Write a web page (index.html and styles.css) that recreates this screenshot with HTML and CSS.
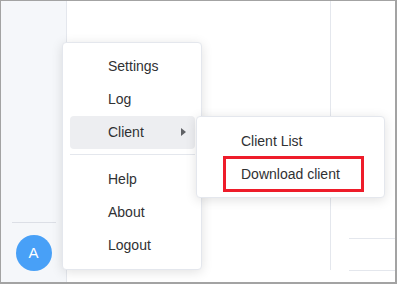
FILE: index.html
```html
<!DOCTYPE html>
<html>
<head>
  <title>Menu</title>
  <link rel="stylesheet" href="styles.css">
</head>
<body>
  <div class="window">
    <div class="sidebar">
      <div class="sep"></div>
      <div class="avatar">A</div>
    </div>
    <div class="main">
      <div class="left"></div>
      <div class="right">
        <div class="row first"></div>
        <div class="row"></div>
      </div>
    </div>

    <div class="menu">
      <div class="item">Settings</div>
      <div class="item">Log</div>
      <div class="item active">Client
        <span class="arrow"></span>
        <div class="submenu">
          <div class="sub-item">Client List</div>
          <div class="sub-item download">Download client<span class="mark"></span></div>
        </div>
      </div>
      <div class="divider"></div>
      <div class="item">Help</div>
      <div class="item">About</div>
      <div class="item">Logout</div>
    </div>
  </div>
</body>
</html>
```

FILE: styles.css
```css
body {
  margin: 0;
  font-family: "Liberation Sans", Arial, sans-serif;
  font-size: 14px;
  color: #303133;
}
.window {
  position: relative;
  width: 397px;
  height: 284px;
  box-sizing: border-box;
  border: 1px solid #a3a3a3;
  border-right-width: 2px;
  border-bottom-width: 2px;
  display: flex;
  background: #fff;
  overflow: hidden;
}
.sidebar {
  width: 65px;
  background: #f5f7fa;
  border-right: 1px solid #e4e7ed;
  display: flex;
  flex-direction: column;
  align-items: center;
  justify-content: flex-end;
}
.sep {
  width: 44px;
  height: 1px;
  background: #dcdfe6;
  margin-bottom: 12px;
}
.avatar {
  width: 36px;
  height: 36px;
  border-radius: 50%;
  background: #48a0f7;
  color: #fff;
  font-size: 15px;
  line-height: 36px;
  text-align: center;
  margin-bottom: 11px;
}
.main {
  flex: 1;
  display: flex;
}
.left {
  width: 263px;
  height: 269px;
  border-right: 1px solid #e4e7ed;
}
.right {
  flex: 1;
  padding-left: 18px;
}
.row {
  height: 31px;
  border-top: 1px solid #e4e7ed;
}
.row.first {
  margin-top: 237px;
}
.menu {
  position: absolute;
  left: 61px;
  top: 41px;
  width: 140px;
  box-sizing: border-box;
  padding: 7px 6px 7px 7px;
  background: #fff;
  border: 1px solid #e4e7ed;
  border-radius: 4px;
  box-shadow: 0 2px 12px rgba(0, 0, 0, 0.12);
}
.item {
  position: relative;
  height: 33px;
  line-height: 33px;
  padding-left: 38px;
  border-radius: 4px;
}
.item.active {
  background: #edeef1;
}
.arrow {
  position: absolute;
  right: 9px;
  top: 12px;
  border-left: 5px solid #606266;
  border-top: 4px solid transparent;
  border-bottom: 4px solid transparent;
}
.divider {
  height: 1px;
  background: #e4e7ed;
  margin: 5px 0 8px;
}
.submenu {
  position: absolute;
  left: calc(100% + 1px);
  top: 0;
  width: 189px;
  box-sizing: border-box;
  padding: 7px 0;
  background: #fff;
  border: 1px solid #e4e7ed;
  border-radius: 4px;
  box-shadow: 0 2px 12px rgba(0, 0, 0, 0.12);
}
.sub-item {
  position: relative;
  height: 33px;
  line-height: 35px;
  padding-left: 44px;
}
.mark {
  position: absolute;
  left: 26px;
  top: -1px;
  width: 141px;
  height: 36px;
  box-sizing: border-box;
  border: 3px solid #ee1c2a;
}
```
